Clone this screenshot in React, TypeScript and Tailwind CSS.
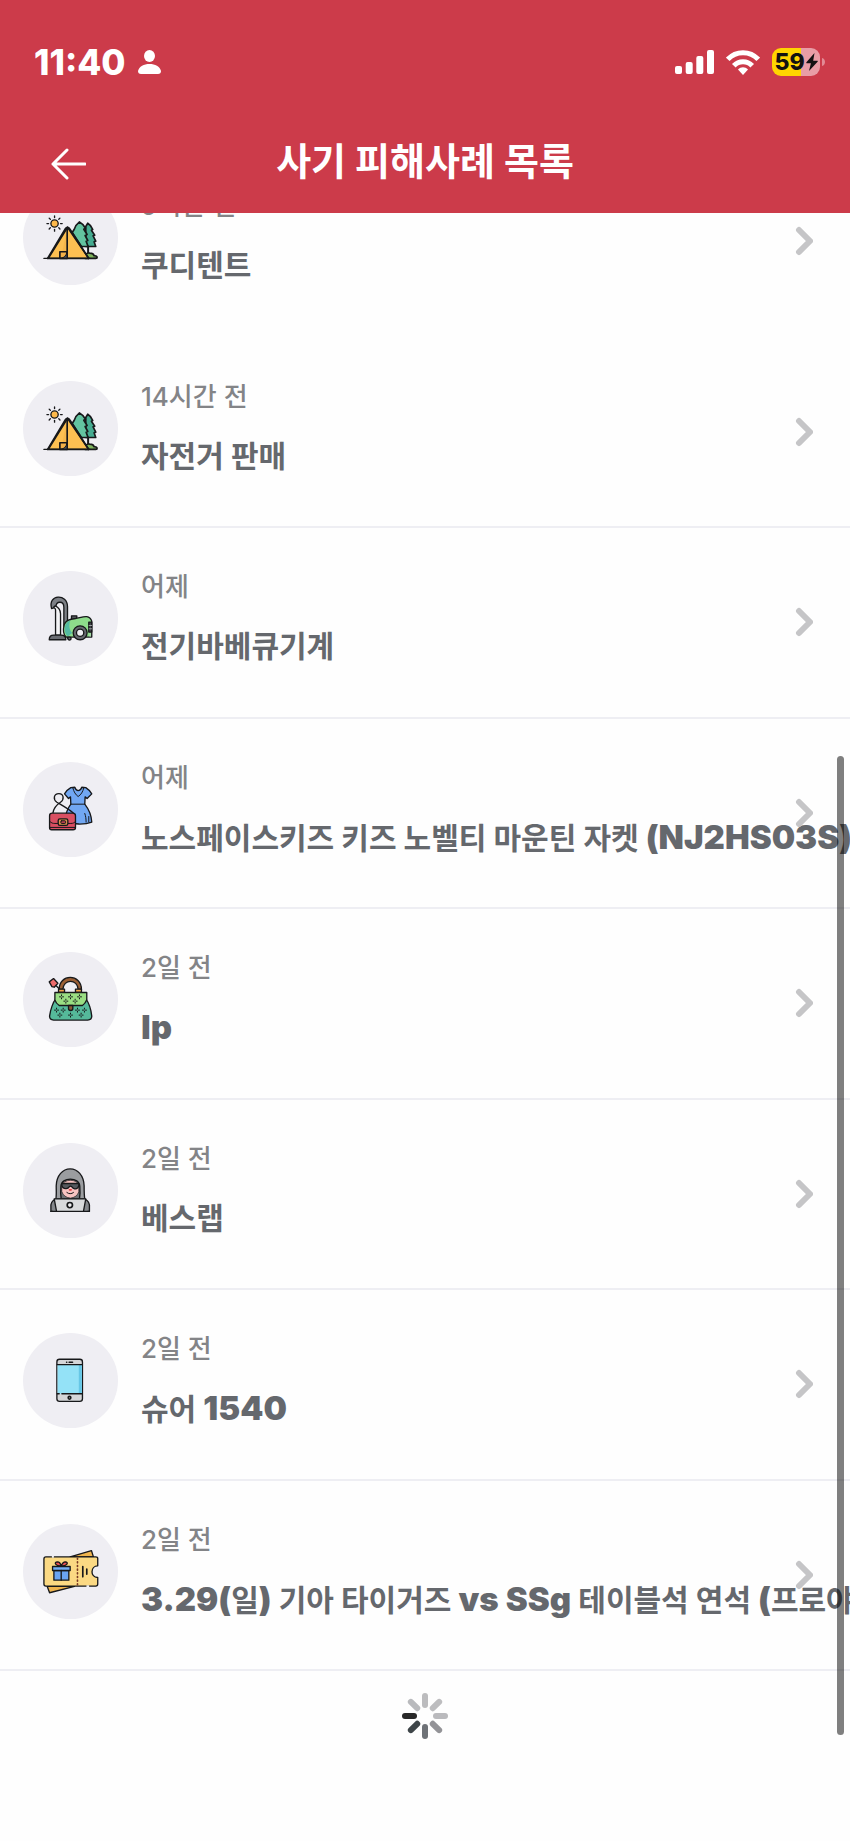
import React from "react";

const INK = "#17181a";

function TentIcon() {
  const rays = [0, 45, 90, 135, 180, 225, 270, 315];
  return (
    <svg viewBox="68 62 286 286" className="size-full" fill="none" stroke={INK} strokeWidth="5" strokeLinecap="round" strokeLinejoin="round" aria-hidden="true">
      <circle cx="163" cy="163" r="11" fill="#fdb94b" strokeWidth="4" />
      {rays.map((a) => (
        <path key={a} d="M163 145v-5" strokeWidth="4" transform={`rotate(${a} 163 163)`} />
      ))}
      <path d="M263 162c7 4 12 11 15 19l-4 2 10 15-5 2 8 16-5 2 5 14h-30V172z" fill="#45ab90" />
      <path d="M264 232v20" strokeWidth="6" />
      <path d="M255 268c-2-12 6-18 14-16 8 0 12 4 13 8 8-1 13 6 5 8z" fill="#7fb45c" />
      <path d="M238 158c8 4 14 11 18 19l-5 3 10 16-6 3 8 15-5 2 6 16h-20l-28-42 6-9c3-10 8-17 16-23z" fill="#63c3a0" />
      <path d="M202 174 144 268h122z" fill="#fdc052" />
      <path d="M202 174v94h-20z" fill="#e9a53f" stroke="none" opacity=".35" />
      <path d="M196 178c3-5 9-5 12 0l58 90M196 178l-54 90M201 176v92" />
      <path d="M179 248h21v20h-21z" fill="#f2b049" />
      <path d="M200 250c-2 10-8 16-19 18h19z" fill="#4c5057" strokeWidth="3" />
      <path d="M131 268h139M281 268h9" strokeWidth="4" />
    </svg>
  );
}

function VacuumIcon() {
  return (
    <svg viewBox="38 33 286 286" className="size-full" fill="none" stroke={INK} strokeWidth="4" strokeLinecap="round" strokeLinejoin="round" aria-hidden="true">
      <path d="M184 178v-10h16v10" fill="#55585d" />
      <path d="M124 146c-12-44 48-46 48-6v60h-11v-58c0-20-24-20-24 0z" fill="#7d8086" />
      <path d="M136 226v-76c0-4-3-6-6-8l5-4c11 5 16 12 16 24v64z" fill="#f4f4f6" />
      <path d="M162 195c5-16 21-18 34-19 17-2 41-16 49 8v48h-77c-9-8-9-25-6-37z" fill="#8edc8b" />
      <path d="M165 197c5-10 10-14 15-15-4 15-4 25 6 38l-13 10c-9-7-11-21-8-33z" fill="#54b9a2" stroke="none" />
      <path d="M236 187h9v30h-9z" fill="#3e4146" />
      <path d="M237 197h8M237 207h8M240 222v8" stroke="#d5d6d9" strokeWidth="2" />
      <circle cx="210" cy="219" r="21" fill="#66696f" />
      <circle cx="210" cy="219" r="11" fill="#efeff3" strokeWidth="4" />
      <path d="M117 240c0-10 5-14 13-14h23c8 0 14 4 14 14zM172 232h7c5 0 5 9 0 9-4 0-7-3-7-9z" fill="#696c72" />
    </svg>
  );
}

function DressIcon() {
  return (
    <svg viewBox="38 35 286 286" className="size-full" fill="none" stroke={INK} strokeWidth="4" strokeLinecap="round" strokeLinejoin="round" aria-hidden="true">
      <path d="M182 112l12-1c2 6 6 10 10 10s9-4 11-10l12 1c8 5 14 11 18 19l-14 14-6-5-1 22c14 18 20 34 21 54-20 8-58 8-82-2 3-23 9-39 19-52l-1-22-6 5-12-14c4-8 10-14 19-19z" fill="#71a7f2" />
      <path d="M188 113c3 12 8 20 16 26 9-6 14-14 17-26M181 162h43M224 190c3 8 4 17 4 26M236 199v16" strokeWidth="3" />
      <path d="M128 189c2-17 12-26 23-33 12-8 10-26-5-26-16 0-18 18-6 26 13 8 34 19 50 33" strokeWidth="4" />
      <path d="M118 197c0-5 3-8 8-8h61c6 0 9 3 9 8v36c0 4-3 6-7 6h-65c-4 0-6-2-6-6z" fill="#d94f62" />
      <path d="M118 232h78M119 214c4 5 9 6 15 6h48c7 0 11-2 14-6" strokeWidth="3" />
      <rect x="144" y="206" width="29" height="20" rx="5" fill="#d9924d" />
      <rect x="152" y="212" width="14" height="8" rx="2" fill="#c04350" strokeWidth="3" />
    </svg>
  );
}

const SPARKLES = [
  [154, 171], [181, 171], [208, 171], [167, 184], [195, 184],
  [139, 211], [159, 211], [202, 211], [223, 211], [149, 226], [181, 226], [213, 226],
];

function HandbagIcon() {
  return (
    <svg viewBox="38 36 286 286" className="size-full" fill="none" stroke={INK} strokeWidth="4" strokeLinecap="round" strokeLinejoin="round" aria-hidden="true">
      <path d="M137 137l9 9" />
      <path d="M117 126l13-10 13 14-11 12-7-2z" fill="#ee6c6c" />
      <path d="M147 149c-1-48 67-49 67 0h-10c-1-33-45-33-46 0z" fill="#9b6035" />
      <path d="M136 178c-7 8-16 33-18 51 0 8 4 12 12 12h103c8 0 12-5 12-12-2-18-10-41-17-51z" fill="#55b99a" />
      <path d="M134 158h96v22c-3 8-7 13-13 17h-70c-7-5-11-10-13-17z" fill="#9ade83" />
      <path d="M145 148h18v9h-18zM196 148h18v9h-18z" fill="#f4a64f" />
      <path d="M175 197h13v9c0 8-13 8-13 0z" fill="#8c5833" />
      {SPARKLES.map(([x, y]) => (
        <path key={`${x}-${y}`} d={`M${x} ${y - 6}v3M${x} ${y + 6}v-3M${x - 6} ${y}h3M${x + 6} ${y}h-3`} strokeWidth="3" />
      ))}
    </svg>
  );
}

function HackerIcon() {
  return (
    <svg viewBox="38 38 286 286" className="size-full" fill="none" stroke={INK} strokeWidth="4" strokeLinecap="round" strokeLinejoin="round" aria-hidden="true">
      <path d="M122 244v-20c2-12 10-17 22-20h72c12 3 20 8 22 20v20z" fill="#84878b" />
      <path d="M137 206c2-10 1-24 1-39 1-32 20-51 42-51s41 19 42 51c0 15 0 29 2 39z" fill="#9b9da0" />
      <path d="M153 206c-2-12-2-26-1-37 1-30 56-30 57 0 1 11 1 25-1 37z" fill="#6e7175" />
      <path d="M155 166c4-21 47-21 51 0v19c-3 11-14 18-25 19-12-1-23-8-26-19z" fill="#f8c4c2" strokeWidth="2" />
      <path d="M155 160h51v7l-3 6c-5 5-15 4-18-3-2-3-6-3-8 0-4 7-14 7-19 2l-3-5z" fill="#55585d" />
      <path d="M178 179h5" stroke="#e63e42" strokeWidth="5" />
      <path d="M170 187c6 5 14 5 20 0" strokeWidth="3" />
      <path d="M132 206h95l-7 38h-81z" fill="#d9dadc" />
      <circle cx="179" cy="225" r="8" fill="#eeeef0" strokeWidth="5" />
      <path d="M122 244h5M233 244h5" />
    </svg>
  );
}

function PhoneIcon() {
  return (
    <svg viewBox="38 39 286 286" className="size-full" fill="none" stroke={INK} strokeWidth="4" strokeLinecap="round" strokeLinejoin="round" aria-hidden="true">
      <rect x="140" y="118" width="77" height="127" rx="8" fill="#d5d6d8" />
      <path d="M142 134h73v88h-73z" fill="#94e2f7" stroke="none" />
      <path d="M206 134h9v88h-9z" fill="#66c7e6" stroke="none" />
      <path d="M141 134h75M141 222h6M155 222h61" />
      <path d="M177 127h10" strokeWidth="5" />
      <path d="M169 127h1" />
      <circle cx="178" cy="234" r="4" strokeWidth="5" />
    </svg>
  );
}

function TicketIcon() {
  return (
    <svg viewBox="38 40 286 286" className="size-full" fill="none" stroke={INK} strokeWidth="4" strokeLinecap="round" strokeLinejoin="round" aria-hidden="true">
      <path d="M111 228l7 19 75-19zM180 139l64-19 6 19z" fill="#efb44e" />
      <path d="M107 139h150c4 0 6 2 6 5v22c-22 0-24 35 0 35v20c0 4-2 6-6 6H107c-4 0-6-2-6-6v-76c0-4 2-6 6-6z" fill="#fbd983" />
      <path d="M202 143v80" stroke="#7a3b24" strokeWidth="5" strokeDasharray="3 8" />
      <path d="M218 168v31M230 176v15" strokeWidth="5" />
      <path d="M153 166c-17 1-24-11-11-12 6 0 9 5 11 12 3-7 6-12 12-12 12 1 6 13-12 12z" fill="#e84f55" />
      <path d="M131 180h45v29h-45z" fill="#6aa4f1" />
      <path d="M127 168h53v12h-53z" fill="#75aef4" />
      <path d="M153 180v29" />
      <path d="M125 139h6M229 227h8" stroke="#f1f0f4" strokeWidth="5" strokeLinecap="butt" />
    </svg>
  );
}

type Report = { time: string; title: string; Icon: () => React.JSX.Element };

const REPORTS: Report[] = [
  { time: "9시간 전", title: "쿠디텐트", Icon: TentIcon },
  { time: "14시간 전", title: "자전거 판매", Icon: TentIcon },
  { time: "어제", title: "전기바베큐기계", Icon: VacuumIcon },
  { time: "어제", title: "노스페이스키즈 키즈 노벨티 마운틴 자켓 (NJ2HS03S)", Icon: DressIcon },
  { time: "2일 전", title: "lp", Icon: HandbagIcon },
  { time: "2일 전", title: "베스랩", Icon: HackerIcon },
  { time: "2일 전", title: "슈어 1540", Icon: PhoneIcon },
  { time: "2일 전", title: "3.29(일) 기아 타이거즈 vs SSg 테이블석 연석 (프로야구)", Icon: TicketIcon },
];

/* Latin letters and digits are set heavier and a step larger than the Hangul. */
function MixedTitle({ text }: { text: string }) {
  return (
    <span className="mt-[23px] text-[30px] leading-10 font-bold text-[#65686d]">
      {text.split(/([\x21-\x7e]+)/).map((part, i) =>
        i % 2 ? (
          <span key={i} className="text-[33px] font-black">{part}</span>
        ) : (
          part
        ),
      )}
    </span>
  );
}

function ReportRow({ time, title, Icon }: Report) {
  return (
    <li className="border-b-2 border-[#eeeef3] first:border-transparent odd:h-[191px] even:h-[190px]">
      <a href="#" className="flex h-full items-start pt-[43px] pr-[37px] pl-[23px]">
        <span className="size-[95px] shrink-0 rounded-full bg-[#efeef3]">
          <Icon />
        </span>
        <span className="ml-[23px] flex min-w-0 flex-1 flex-col whitespace-nowrap">
          <span className="text-[26px] leading-8 font-medium text-[#838487]">{time}</span>
          <MixedTitle text={title} />
        </span>
        <svg viewBox="0 0 18 30" className="mt-9 h-[30px] w-[18px] shrink-0" fill="none" stroke="#c5c5c7" strokeWidth="6" strokeLinecap="round" strokeLinejoin="round" aria-hidden="true">
          <path d="M4 4l11 11L4 26" />
        </svg>
      </a>
    </li>
  );
}

function StatusBar() {
  return (
    <div className="flex h-6 items-center justify-between pr-[25px] pl-[34px]">
      <div className="flex items-center gap-3">
        <span className="text-[35px] leading-6 font-extrabold">11:40</span>
        <svg viewBox="0 0 23 24" className="h-6 w-[23px]" fill="currentColor" aria-hidden="true">
          <ellipse cx="11.5" cy="6" rx="5.5" ry="6" />
          <path d="M0 21C1 16.500 6 14 11.500 14S22 16.500 23 21c0 2-1 3-3 3H3c-2 0-3-1-3-3z" />
        </svg>
      </div>
      <div className="flex items-center">
        <svg viewBox="0 0 39 24" className="h-6 w-[39px]" fill="currentColor" aria-hidden="true">
          <rect x="0" y="16" width="7" height="8" rx="2" />
          <rect x="10.700" y="12" width="7" height="12" rx="2" />
          <rect x="21.300" y="6" width="7" height="18" rx="2" />
          <rect x="32" y="0" width="7" height="24" rx="2" />
        </svg>
        <svg viewBox="0 0 34 25" className="ml-3 h-[25px] w-[34px]" fill="none" stroke="currentColor" strokeWidth="5" aria-hidden="true">
          <path d="M1.700 9.400C10 .4 24 .4 32.300 9.400M7.800 15.800c5-5.300 13.400-5.300 18.400 0" />
          <path d="M17 25l-5-5.400c3-3 7-3 10 0z" fill="currentColor" stroke="none" />
        </svg>
        <div className="ml-3 flex h-7 w-12 items-center justify-center gap-px rounded-[9px] bg-linear-to-r from-[#ffd500] from-60% to-[#e89da6] to-60% text-[#121212]">
          <span className="text-[23px] leading-7 font-extrabold">59</span>
          <svg viewBox="0 0 12 18" className="h-[18px] w-3" fill="currentColor" aria-hidden="true">
            <path d="M8.500 0 .4 9.300c-.3.500 0 1 .5 1h4L3 18l8.600-9.300c.4-.5.100-1-.5-1H7.200z" />
          </svg>
        </div>
        <svg viewBox="0 0 3 8" className="ml-[2px] h-2 w-[3px]" fill="#e28a95" aria-hidden="true">
          <path d="M0 0c4 1 4 7 0 8z" />
        </svg>
      </div>
    </div>
  );
}

const SPOKES = ["#bcbcbe", "#bdbdbf", "#bababd", "#939397", "#6e7277", "#3e4548", "#282828", "#b9babd"];

function Spinner() {
  return (
    <svg viewBox="0 0 46 46" className="size-[46px]" strokeWidth="6" strokeLinecap="round" role="status" aria-label="불러오는 중">
      {SPOKES.map((color, i) => (
        <path key={i} d="M23 3v9" stroke={color} transform={`rotate(${i * 45} 23 23)`} />
      ))}
    </svg>
  );
}

export default function App() {
  return (
    <div className="relative flex min-h-screen flex-col overflow-hidden bg-[#fefefe] font-[Inter,'Noto_Sans_CJK_KR',sans-serif]">
      <header className="relative z-10 bg-[#cc3b4a] pt-[50px] pb-[23px] text-white">
        <StatusBar />
        <div className="mt-[58px] grid h-[58px] grid-cols-[1fr_auto_1fr] items-center px-[50px]">
          <button type="button" aria-label="뒤로" className="w-fit pt-1.5">
            <svg viewBox="0 0 36 32" className="h-8 w-9" fill="none" stroke="currentColor" strokeWidth="3" strokeLinecap="round" strokeLinejoin="round" aria-hidden="true">
              <path d="M17 2 3 16l14 14M3 16h32" />
            </svg>
          </button>
          <h1 className="text-[38px] leading-[58px] font-bold">사기 피해사례 목록</h1>
        </div>
      </header>
      <main>
        <ul className="-mt-[66px]">
          {REPORTS.map((report) => (
            <ReportRow key={report.title} {...report} />
          ))}
        </ul>
        <div className="flex justify-center pt-[22px] pb-24">
          <Spinner />
        </div>
      </main>
      <div className="pointer-events-none absolute top-[756px] right-[6px] h-[979px] w-[7px] rounded-full bg-black/50" />
    </div>
  );
}
